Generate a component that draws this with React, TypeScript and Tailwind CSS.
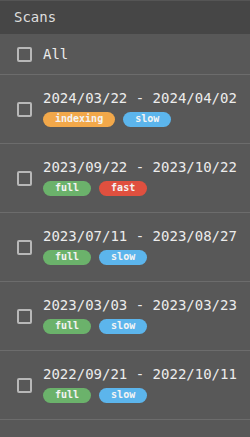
const scans = [
  { from: '2024/03/22', to: '2024/04/02', tags: ['indexing', 'slow'] },
  { from: '2023/09/22', to: '2023/10/22', tags: ['full', 'fast'] },
  { from: '2023/07/11', to: '2023/08/27', tags: ['full', 'slow'] },
  { from: '2023/03/03', to: '2023/03/23', tags: ['full', 'slow'] },
  { from: '2022/09/21', to: '2022/10/11', tags: ['full', 'slow'] },
];

const tagColors: Record<string, string> = {
  indexing: 'bg-[#f2a84a]',
  slow: 'bg-[#5cb5ec]',
  full: 'bg-[#6bb26b]',
  fast: 'bg-[#e0503f]',
};

const Checkbox = () => (
  <span className="block h-[15px] w-[15px] shrink-0 rounded-[2px] border-2 border-[#b8b8b8]" />
);

const Tag = ({ name }: { name: string }) => (
  <span
    className={`flex h-[15px] items-center rounded-full px-3 text-[10px] font-bold leading-none text-[#f4f4f4] ${tagColors[name]}`}
  >
    {name}
  </span>
);

export default function App() {
  return (
    <div
      className="h-[437px] w-[250px] overflow-hidden bg-[#585858] text-[#ececec]"
      style={{ fontFamily: '"DejaVu Sans Mono", "Liberation Mono", monospace' }}
    >
      {/* header */}
      <div className="flex h-[34px] items-center border-t border-[#555] bg-[#464646] px-[14px] text-[14px] text-[#dedede]">
        Scans
      </div>

      {/* select all */}
      <div className="flex h-[41px] items-center gap-[11px] border-b border-[#6c6c6c] pl-[17px] text-[14px]">
        <Checkbox />
        <span>All</span>
      </div>

      {scans.map((scan) => (
        <div
          key={scan.from}
          className="flex h-[69px] items-center gap-[11px] border-b border-[#6c6c6c] pl-[17px]"
        >
          <Checkbox />
          <div className="flex flex-col gap-1 pb-1">
            <div className="text-[14px] leading-5 whitespace-nowrap">
              {scan.from} - {scan.to}
            </div>
            <div className="flex gap-2">
              {scan.tags.map((t) => (
                <Tag key={t} name={t} />
              ))}
            </div>
          </div>
        </div>
      ))}
    </div>
  );
}
